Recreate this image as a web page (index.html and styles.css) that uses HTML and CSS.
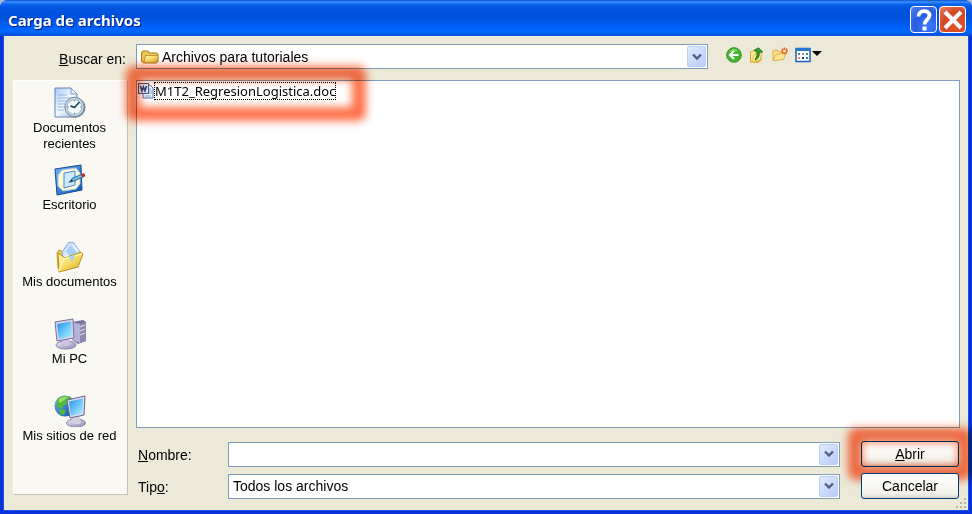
FILE: index.html
```html
<!DOCTYPE html>
<html lang="es">
<head>
  <meta charset="UTF-8" />
  <meta name="viewport" content="width=device-width, initial-scale=1.0" />
  <title>Carga de archivos</title>
  <link rel="stylesheet" href="styles.css">
</head>
<body>

  <div class="window">
    <header class="titlebar">
      <h1>Carga de archivos</h1>
      <button class="title-btn help" aria-label="Ayuda">
        <svg width="24" height="24" viewBox="0 0 24 24"><path d="M6.500 8.500C6.500 1.500 17.500 1.500 17.500 7.500C17.500 12 12.500 11.500 12.500 16.500" fill="none" stroke="#fff" stroke-width="3.800"/><rect x="10.500" y="18.500" width="4" height="4" fill="#fff"/></svg>
      </button>
      <button class="title-btn close" aria-label="Cerrar">
        <svg width="24" height="24" viewBox="0 0 24 24"><path d="M4 4L20 20M20 4L4 20" stroke="#fff" stroke-width="4"/></svg>
      </button>
    </header>

    <main class="dialog">
      <!-- Folder selector and toolbar -->
      <div class="lookup">
        <label for="folder"><u>B</u>uscar en:</label>
        <div class="combo">
          <svg class="folder-icon" width="18" height="16" viewBox="0 0 16 16" preserveAspectRatio="none">
            <defs><linearGradient id="gold" x2="1" y2="1"><stop stop-color="#fffbc0"/><stop offset=".55" stop-color="#f5d75b"/><stop offset="1" stop-color="#cf9d22"/></linearGradient></defs>
            <path d="M.5 12V3.500L2 2H6L7.500 4H13.500L15 5.500V12.500L13.500 14H2.500Z" fill="#edcb59" stroke="#ad7d16"/>
            <path d="M2.500 13.500L4 6.500H15.500L14 13.500Z" fill="url(#gold)" stroke="#c39b35"/>
          </svg>
          <select id="folder"><option>Archivos para tutoriales</option></select>
          <span class="arrow"><svg width="10" height="8" viewBox="0 0 10 8"><path d="M1 1.500L5 5.500L9 1.500" fill="none" stroke="#4d6185" stroke-width="2.400"/></svg></span>
        </div>
        <div class="toolbar">
          <button aria-label="Atrás">
            <svg width="16" height="16" viewBox="0 0 16 16"><circle cx="8" cy="8" r="7.300" fill="#43b52f" stroke="#2d9320"/><path d="M3 5.500Q7-.5 12.500 4Q8 3 3 5.500" fill="#8edb72"/><path d="M12.500 8H4.500M8 4L4 8L8 12" fill="none" stroke="#fff" stroke-width="2.200"/></svg>
          </button>
          <button aria-label="Subir un nivel">
            <svg width="16" height="16" viewBox="0 0 16 16"><path d="M1.500 15V5L5 3.500L7 5H12V13L9 15.500Z" fill="url(#gold)" stroke="#d2a63a"/><path d="M3 15L5 8L13 6L11 13Z" fill="#ffeb91" stroke="#dfb64b" stroke-width=".7"/><path d="M6 13Q11 11 10 5L13.500 5L9.500 .8L5 3.500L8 4Q9 9 6 13Z" fill="#30a638" stroke="#16701f"/></svg>
          </button>
          <button aria-label="Crear nueva carpeta">
            <svg width="16" height="16" viewBox="0 0 16 16"><path d="M1 13.500V4L5 3L6.500 5H12V9L11 12Z" fill="#ffe48a" stroke="#dcaa40"/><path d="M1 13.500L4 7.500L14 6L11.500 12.500Z" fill="#ffe794" stroke="#e1b24c"/><path d="M12.500 .5V7.500M9 4H16M10 1.500L15 6.500M15 1.500L10 6.500" stroke="#ec5b2c" stroke-width="1.300"/><circle cx="12.500" cy="4" r="1.500" fill="#ffe6a0"/></svg>
          </button>
          <button aria-label="Menú Ver">
            <svg width="27" height="16" viewBox="0 0 27 16"><rect x="1" y="1.500" width="14" height="13" fill="#fff" stroke="#1763b3" stroke-width="1.500"/><path d="M1 2.500H15" stroke="#2477cd" stroke-width="3"/><path d="M3 6h2v2H3zM11 10h2v2h-2z" fill="#4d7bbd"/><path d="M7 6h2v2H7z" fill="#969caf"/><path d="M11 6h2v2h-2z" fill="#3ba33a"/><path d="M3 10h2v2H3z" fill="#e38379"/><path d="M7 10h2v2H7z" fill="#2b304d"/><path d="M17 4H27L22 9Z"/></svg>
          </button>
        </div>
      </div>

      <div class="content">
        <nav class="places">
          <button>
            <svg width="32" height="32" viewBox="0 0 32 32">
              <defs><linearGradient id="paper" x2="1" y2="1"><stop stop-color="#a7c7f5"/><stop offset=".5" stop-color="#f4f9ff"/><stop offset="1" stop-color="#9bbbe9"/></linearGradient></defs>
              <path d="M1 1H17L23 7V30H1Z" fill="url(#paper)" stroke="#6783b5"/><path d="M17 1V7H23Z" fill="#e7f1ff" stroke="#809cc8"/>
              <path d="M4 8H13M4 11H17M4 14H13M4 17H11M4 20H10M4 23H10" stroke="#90b5e8"/>
              <circle cx="21.500" cy="20.500" r="10" fill="#6d8495"/><circle cx="20.500" cy="20" r="9.700" fill="#c7d7e1" stroke="#718799"/><circle cx="20.500" cy="20" r="7.300" fill="#f5fbfd" stroke="#9db5c4"/>
              <path d="M20.500 13V14.500M20.500 25.500V27M13.500 20H15M26 20H27.500" stroke="#7897ab"/><path d="M25.500 15L20.500 20.500L16.500 18.800" fill="none" stroke="#164e5d" stroke-width="1.800"/>
            </svg>
            <span>Documentos recientes</span>
          </button>
          <button>
            <svg width="32" height="32" viewBox="0 0 32 32">
              <defs><linearGradient id="blue" x2="1" y2="1"><stop stop-color="#73b4f0"/><stop offset="1" stop-color="#0750ae"/></linearGradient></defs>
              <path d="M1 5L27 1L28 26L3 31Z" fill="url(#blue)" stroke="#174b98"/>
              <path d="M8 6L22 4L26 9V20L22 25L9 27L4 22V11Z" fill="#fff8d4" stroke="#9fcce7"/><path d="M10 9L21 7V21L10 24Z" fill="#cce9ff" stroke="#438acd"/>
              <path d="M16 18L18 14.500L27 10.500L29 13L20 17Z" fill="#75bddd" stroke="#2b6c98"/><path d="M27 10.500L30 9L31.500 12L29 13.500Z" fill="#c7262d"/><path d="M14 19L18 15L19 17Z" fill="#233b55"/>
            </svg>
            <span>Escritorio</span>
          </button>
          <button>
            <svg width="32" height="32" viewBox="0 0 32 32">
              <path d="M3 12L5 9L10 11L14 17L7 30L4 27Z" fill="#f0c84c" stroke="#c99b2b"/>
              <path d="M8 11L15 1L20 2L28 14L18 25L9 18Z" fill="url(#paper)" stroke="#86abd8"/><path d="M12 10L17 4L23 11L17 18Z" fill="#a5d0f9"/>
              <path d="M4 12L11 17L27 11L29 13L24 26L5 31Z" fill="url(#gold)" stroke="#ba8e27"/><path d="M5 30L10 18L28 13" fill="none" stroke="#fff4aa" stroke-width="1.500"/><path d="M15 16L21 14L18 21Z" fill="#a7d1ef"/>
            </svg>
            <span>Mis documentos</span>
          </button>
          <button>
            <svg width="32" height="32" viewBox="0 0 32 32">
              <defs><linearGradient id="screen" x2="1" y2="1"><stop stop-color="#278ce6"/><stop offset=".6" stop-color="#77d0fc"/><stop offset="1" stop-color="#b6ecff"/></linearGradient><linearGradient id="metal" x2="1" y2="1"><stop stop-color="#efedfc"/><stop offset="1" stop-color="#8b87b2"/></linearGradient></defs>
              <path d="M18 4L29 2L32 4V23L24 26L18 22Z" fill="#777099"/><path d="M18 4L26 6V25L18 22Z" fill="#b7b2d6"/><path d="M26 6L32 4V23L26 25Z" fill="#8d88af"/><path d="M26 9L31 7M26 13L31 11M26 17L31 15" stroke="#e3dff2"/>
              <ellipse cx="12" cy="27" rx="10" ry="4" fill="url(#metal)" stroke="#8b84ac"/><path d="M8 20H15L16 27Q12 30 8 26Z" fill="#cbc5e0"/>
              <path d="M1 4L19 1L20 20L3 23Z" fill="#d6d4e8" stroke="#736fa0"/><path d="M3 6L17 3.500L18 18L5 21Z" fill="url(#screen)"/>
            </svg>
            <span>Mi PC</span>
          </button>
          <button>
            <svg width="32" height="32" viewBox="0 0 32 32">
              <circle cx="11" cy="11" r="10.500" fill="url(#blue)"/><path d="M3 4Q9-1 17 2L15 8L10 10L8 14L2 11ZM5 14L12 15L10 20L6 19Z" fill="#52b83f"/><path d="M5 4Q9 1 14 2L9 6L5 8Z" fill="#a2dc6c"/>
              <ellipse cx="22" cy="28" rx="9.500" ry="4" fill="url(#metal)" stroke="#8883a2"/><path d="M18 20H25L27 28Q22 31 18 27Z" fill="#d5d1e5"/>
              <path d="M13 5L31 1L30 20L16 23Z" fill="#dddbec" stroke="#64668e"/><path d="M15 6.500L29 3.500L28 18L17 21Z" fill="url(#screen)"/>
            </svg>
            <span>Mis sitios de red</span>
          </button>
        </nav>

        <div class="files-pane">
          <ul class="files">
            <li>
              <button class="file">
                <svg width="16" height="16" viewBox="0 0 16 16"><path d="M5 2H12L15 5V15H5Z" fill="#eef5ff" stroke="#5575a9"/><path d="M9 6H13M11 8H14M11 10H14M7 13H13" stroke="#78a4d9"/><rect x=".5" y=".5" width="10" height="10" fill="#dce9fb" stroke="#485b91"/><path d="M2.500 3L4 8L5.500 4L7 8L8.500 3" fill="none" stroke="#303f79" stroke-width="1.500"/></svg>
                <span>M1T2_RegresionLogistica.doc</span>
              </button>
              <span class="glow"></span>
            </li>
          </ul>

          <form class="fields" onsubmit="return false">
            <label for="name"><u>N</u>ombre:</label>
            <div class="combo">
              <input id="name" type="text" autocomplete="off">
              <span class="arrow"><svg width="10" height="8" viewBox="0 0 10 8"><path d="M1 1.500L5 5.500L9 1.500" fill="none" stroke="#4d6185" stroke-width="2.400"/></svg></span>
            </div>
            <div class="action">
              <button class="push"><u>A</u>brir</button>
              <span class="glow"></span>
            </div>
            <label for="type">Tip<u>o</u>:</label>
            <div class="combo">
              <select id="type"><option>Todos los archivos</option></select>
              <span class="arrow"><svg width="10" height="8" viewBox="0 0 10 8"><path d="M1 1.500L5 5.500L9 1.500" fill="none" stroke="#4d6185" stroke-width="2.400"/></svg></span>
            </div>
            <div class="action">
              <button class="push" type="button">Cancelar</button>
            </div>
          </form>
        </div>
      </div>
      <svg class="grip" width="12" height="12" viewBox="0 0 12 12"><path d="M9 1h2v2H9zM5 5h2v2H5zM9 5h2v2H9zM1 9h2v2H1zM5 9h2v2H5zM9 9h2v2H9z" fill="#b9b4a0"/></svg>
    </main>
  </div>

</body>
</html>
```

FILE: styles.css
```css
* {
  box-sizing: border-box;
}

body {
  margin: 0;
  background: #a9b8d8;
  font-family: "Liberation Sans", Arial, sans-serif;
  font-size: 14px;
  line-height: 16px;
  color: #000;
}

button,
input,
select {
  font: inherit;
  color: inherit;
}

button {
  padding: 0;
  border: none;
  background: none;
}

svg {
  display: block;
  flex: none;
}

.window {
  display: flex;
  flex-direction: column;
  min-height: 100vh;
  overflow: hidden;
  border-radius: 8px 8px 0 0;
  background: #0831d9;
}

/* Title bar */
.titlebar {
  display: flex;
  align-items: center;
  gap: 2px;
  height: 36px;
  padding: 3px 6px 0 8px;
  background: linear-gradient(#0a50cf 0, #3c91ff 2px, #0a65ee 4px, #0055e0 8px, #0050dc 18px, #0061fa 27px, #0068ff 32px, #0046c8 36px);
}

.titlebar h1 {
  flex: 1;
  margin: 0;
  color: #fff;
  font: bold 15px/18px "Noto Sans", sans-serif;
  text-shadow: 1px 1px 1px #001f80;
}

.title-btn {
  display: grid;
  place-items: center;
  width: 27px;
  height: 27px;
  border: 1px solid #fff;
  border-radius: 4px;
}

.help {
  background: radial-gradient(circle at 70% 75%, #3d79fa, #285ce1 55%, #5b84e8);
}

.close {
  background: radial-gradient(circle at 70% 75%, #e4532c, #d34823 55%, #e68267);
}

/* Dialog */
.dialog {
  position: relative;
  flex: 1;
  display: flex;
  flex-direction: column;
  gap: 11px;
  margin: 0 4px 4px;
  padding: 8px 8px 11px 9px;
  background: #ece9d8;
  box-shadow: 0 0 0 1px #0e55e8;
}

.lookup {
  display: grid;
  grid-template-columns: 113px 1fr 242px;
  align-items: center;
  column-gap: 10px;
}

.lookup label {
  padding-top: 4px;
  text-align: right;
}

.toolbar {
  display: flex;
  gap: 7px;
  padding: 0 0 3px 8px;
}

.combo {
  display: flex;
  align-items: center;
  height: 25px;
  padding: 1px;
  border: 1px solid #7f9db9;
  background: #fff;
}

.combo select,
.combo input {
  flex: 1;
  min-width: 0;
  height: 21px;
  padding: 0 3px;
  border: none;
  outline: none;
  appearance: none;
  background: none;
}

.folder-icon {
  margin-left: 3px;
}

.arrow {
  display: grid;
  place-items: center;
  width: 19px;
  height: 21px;
  border: 1px solid #bccdf5;
  border-radius: 2px;
  background: linear-gradient(135deg, #e0eafe, #b8cbf6);
}

.content {
  flex: 1;
  display: grid;
  grid-template-columns: 115px 1fr;
  column-gap: 8px;
}

/* Places bar */
.places {
  margin-bottom: 4px;
  padding: 6px 2px 0 0;
  border: 1px solid #fff;
  border-right-color: #c5c2b4;
  border-bottom-color: #c5c2b4;
  background: #f9f8f3;
  font-size: 13px;
}

.places button {
  display: flex;
  flex-direction: column;
  align-items: center;
  gap: 1px;
  width: 100%;
  height: 77px;
  padding: 0 5px;
}

/* File list */
.files-pane {
  display: flex;
  flex-direction: column;
  gap: 13px;
}

.files {
  flex: 1;
  margin: 0;
  padding: 2px 1px;
  border: 1px solid #7f9db9;
  background: #fff;
  list-style: none;
}

.files li {
  position: relative;
  width: fit-content;
}

.file {
  display: flex;
  align-items: flex-start;
  gap: 1px;
  font: 13px/16px "Noto Sans", sans-serif;
}

.file span {
  outline: 1px dotted #000;
}

/* Red highlight ring */
.glow {
  position: absolute;
  inset: -17px -31px -22px -12px;
  border: 14px solid #ff7148;
  border-radius: 8px;
  filter: blur(4px);
  mix-blend-mode: multiply;
  pointer-events: none;
}

/* Name and type */
.fields {
  display: grid;
  grid-template-columns: 90px 1fr 98px;
  align-items: center;
  gap: 6px 0;
  padding-left: 2px;
  padding-right: 1px;
}

.fields .combo {
  margin-right: 21px;
}

.fields label {
  padding-top: 2px;
}

.action {
  position: relative;
}

.action .glow {
  inset: -13px;
}

.push {
  display: block;
  width: 100%;
  height: 26px;
  border: 1px solid #003c74;
  border-radius: 3px;
  background: linear-gradient(#fff, #f3f2ec 80%, #dcd6cb);
}

.grip {
  position: absolute;
  right: 1px;
  bottom: 1px;
}
```
